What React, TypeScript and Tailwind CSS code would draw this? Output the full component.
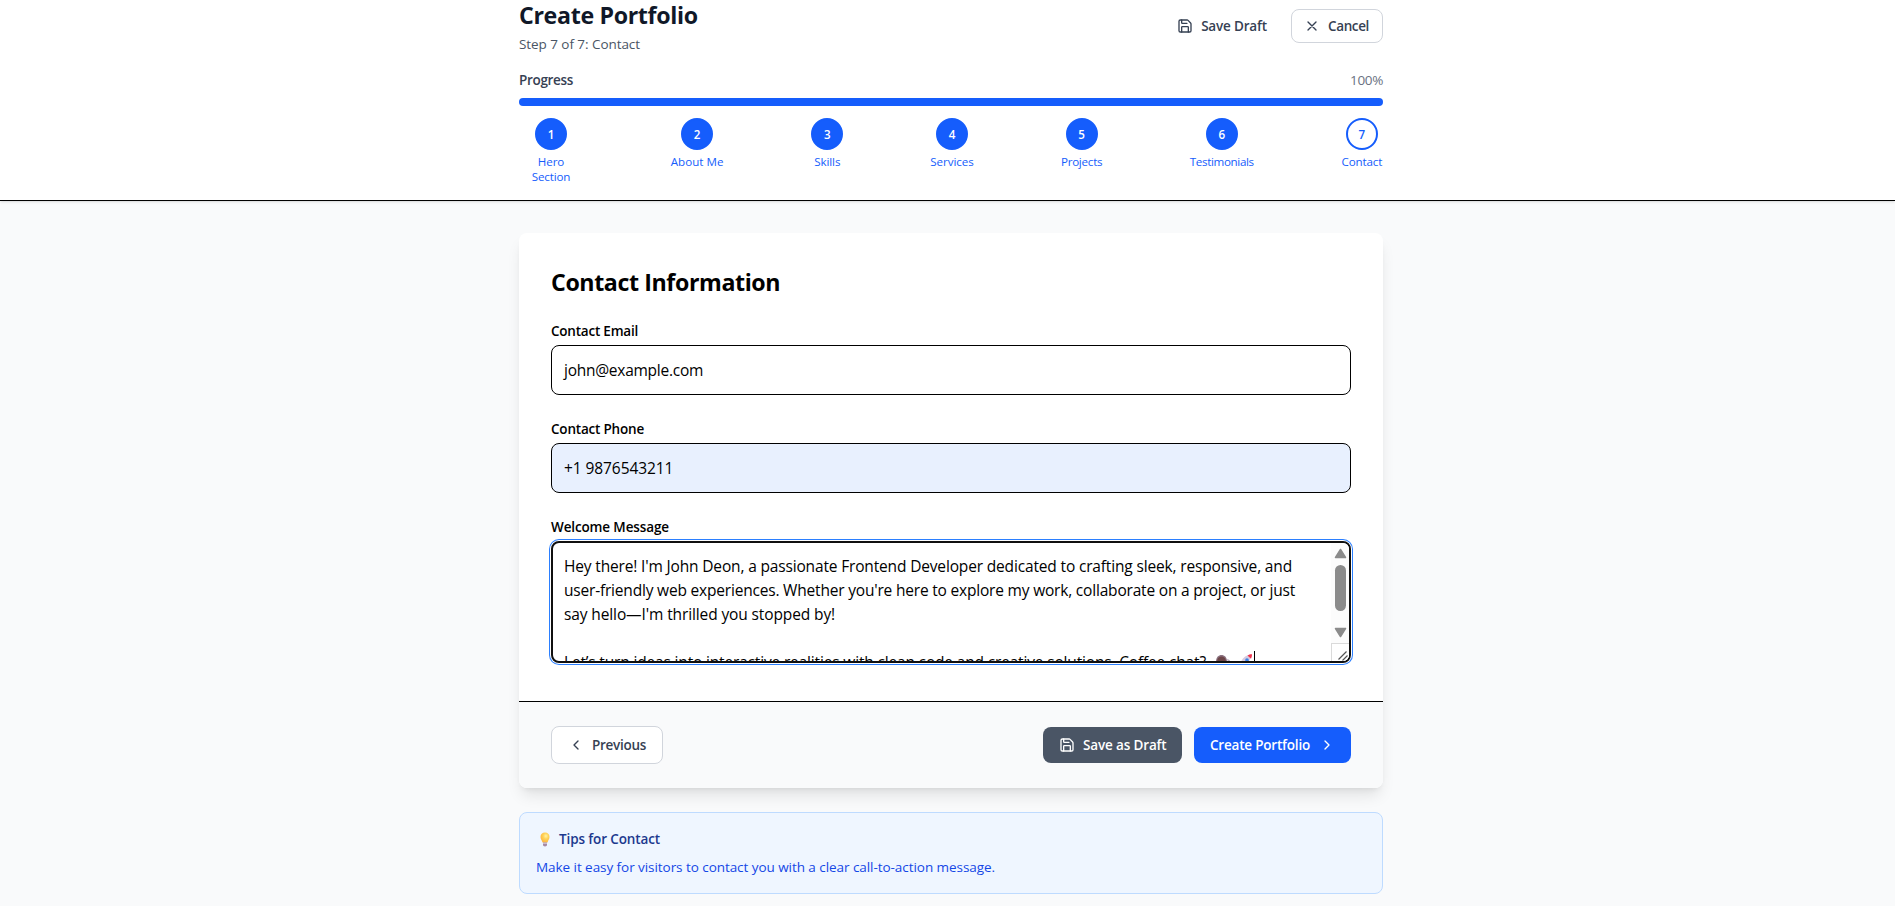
import type { ReactNode } from 'react';

type Step = { label: ReactNode; width: string; tracking: string };

const steps: Step[] = [
  { label: <>Hero<br />Section</>, width: 'w-16', tracking: 'tracking-[-0.13px]' },
  { label: 'About Me', width: 'w-[54px]', tracking: 'tracking-[0.05px]' },
  { label: 'Skills', width: 'w-8', tracking: 'tracking-[-0.13px]' },
  { label: 'Services', width: 'w-[43px]', tracking: 'tracking-[-0.06px]' },
  { label: 'Projects', width: 'w-[42px]', tracking: 'tracking-[-0.24px]' },
  { label: 'Testimonials', width: 'w-16', tracking: 'tracking-[-0.34px]' },
  { label: 'Contact', width: 'w-[42px]', tracking: 'tracking-[-0.14px]' },
];

function SaveIcon() {
  return (
    <svg className="size-4 shrink-0" viewBox="0 0 24 24" fill="none" stroke="currentColor" strokeWidth="2" strokeLinecap="round" strokeLinejoin="round">
      <path d="M15.2 3a2 2 0 0 1 1.4.6l3.8 3.8a2 2 0 0 1 .6 1.4V19a2 2 0 0 1-2 2H5a2 2 0 0 1-2-2V5a2 2 0 0 1 2-2z" />
      <path d="M17 21v-7a1 1 0 0 0-1-1H8a1 1 0 0 0-1 1v7" />
      <path d="M7 3v4a1 1 0 0 0 1 1h7" />
    </svg>
  );
}

function StrokeIcon({ d }: { d: string }) {
  return (
    <svg className="size-4 shrink-0" viewBox="0 0 24 24" fill="none" stroke="currentColor" strokeWidth="2" strokeLinecap="round" strokeLinejoin="round">
      <path d={d} />
    </svg>
  );
}

function BulbIcon() {
  return (
    <svg className="mr-[9px] ml-1 h-[15px] w-[10px] shrink-0" viewBox="0 0 10 15">
      <defs>
        <radialGradient id="bulb" cx="0.6" cy="0.35" r="0.65">
          <stop offset="0" stopColor="#fff3a6" />
          <stop offset="0.45" stopColor="#ffd358" />
          <stop offset="1" stopColor="#fdb640" />
        </radialGradient>
      </defs>
      <path d="M5 .6C2.3.6.5 2.5.5 4.9c0 2.4 1.5 3.3 2 5.6h5c.5-2.300 2-3.200 2-5.600C9.500 2.500 7.700.6 5 .6Z" fill="url(#bulb)" />
      <path d="M3 10.500h4v2.300c0 1-.8 1.700-2 1.700s-2-.7-2-1.700Z" fill="#a58aa5" />
      <path d="M3 11.200h4v.8H3Z" fill="#d5c7d8" />
    </svg>
  );
}

function MessageEmojis() {
  return (
    <svg className="ml-[9px] h-6 w-[39px] shrink-0" viewBox="0 0 39 24">
      <path d="M1 11.500C1 7.500 3.400 5 6.500 5s5.500 2.500 5.500 6.500v8H1Z" fill="#8b7280" />
      <ellipse cx="6.500" cy="10.500" rx="4.300" ry="4" fill="#6d4548" />
      <path d="M12 10c1.500-.3 2.800.6 2.800 2.500" fill="none" stroke="#b7a5bb" strokeWidth="1.200" />
      <path d="M25.500 13c1.500-4.500 5-8 10.500-8.500-.3 5.200-3 9.500-8 11.500Z" fill="#d6cbe0" />
      <path d="M32.500 5.500c1.200-.9 2.500-1.200 4.500-1.200 0 1.700-.3 3-1 4.400Z" fill="#f0364f" />
      <circle cx="32" cy="10" r="1.800" fill="#3b82e6" />
    </svg>
  );
}

function Scrollbar() {
  return (
    <div className="flex w-[18px] shrink-0 flex-col bg-[#fcfcfc]">
      <div className="flex h-[100px] flex-col items-center pt-[5px]">
        <svg className="h-[11px] w-[13px]" viewBox="0 0 13 11">
          <path d="M6.500 1.500 11.500 9.500H1.500Z" fill="#8b8b8b" stroke="#8b8b8b" strokeWidth="1.500" strokeLinejoin="round" />
        </svg>
        <div className="mt-[6px] h-[46px] w-[11px] rounded-full bg-[#8b8b8b]" />
        <svg className="mt-[16px] h-[11px] w-[13px]" viewBox="0 0 13 11">
          <path d="M6.500 9.500 11.500 1.500H1.500Z" fill="#8b8b8b" stroke="#8b8b8b" strokeWidth="1.500" strokeLinejoin="round" />
        </svg>
      </div>
      <div className="flex flex-1 items-end justify-end border-t border-l border-[#dadada] bg-white">
        <svg className="h-[12px] w-[11px]" viewBox="0 0 11 12" fill="none" stroke="#555" strokeWidth="1.200">
          <path d="M.5 10.500 8.500 2.500M4.500 11.500 9.500 6.500" />
        </svg>
      </div>
    </div>
  );
}

function Label({ children, className }: { children: ReactNode; className: string }) {
  return <label className={`mb-1 block text-[13.5px] leading-5 font-semibold text-black ${className}`}>{children}</label>;
}

export default function App() {
  return (
    <div className="h-[906px] overflow-hidden bg-gray-50 font-['Open_Sans','Segoe_UI',sans-serif]">
      <header className="h-[201px] border-b border-black bg-white pl-[7px] shadow-sm">
        <div className="mx-auto w-[896px] px-4">
          <div className="flex h-[54px] items-start justify-between">
            <div>
              <h1 className="text-[23.2px] leading-[30px] font-bold tracking-[-0.34px] text-gray-900">Create Portfolio</h1>
              <p className="mt-1 text-[13.5px] leading-5 tracking-[-0.06px] text-gray-600">Step 7 of 7: Contact</p>
            </div>
            <div className="mt-[9px] flex gap-3 text-[13.5px] leading-5 font-semibold text-gray-700">
              <button className="flex h-[34px] items-center gap-2 px-3 whitespace-nowrap">
                <SaveIcon />
                <span className="w-[66px] tracking-[-0.18px]">Save Draft</span>
              </button>
              <button className="flex h-[34px] w-[92px] items-center gap-2 rounded-lg border border-gray-300 bg-white px-3 whitespace-nowrap">
                <StrokeIcon d="M18 6 6 18M6 6l12 12" />
                <span className="tracking-[-0.37px]">Cancel</span>
              </button>
            </div>
          </div>

          <div className="mt-4 flex justify-between text-[13.5px] leading-5">
            <span className="font-semibold tracking-[-0.33px] text-gray-700">Progress</span>
            <span className="tracking-[-0.33px] text-gray-500">100%</span>
          </div>
          <div className="mt-2 h-2 rounded-full bg-[#155dfc]" />

          <div className="mt-3 flex justify-between">
            {steps.map((step, i) => (
              <div key={i} className={`flex flex-col items-center ${step.width}`}>
                <div
                  className={`flex size-8 items-center justify-center rounded-full border-2 border-[#155dfc] pt-px text-[11.6px] font-semibold ${
                    i === 6 ? 'bg-white text-[#155dfc]' : 'bg-[#155dfc] text-white'
                  }`}
                >
                  {i + 1}
                </div>
                <span className={`mt-1 text-center text-[11.6px] leading-[15px] whitespace-nowrap text-[#155dfc] ${step.tracking}`}>
                  {step.label}
                </span>
              </div>
            ))}
          </div>
        </div>
      </header>

      <main className="pl-[7px]">
        <div className="mx-auto w-[896px] px-4 pt-8">
          <section className="rounded-lg bg-white shadow-lg">
            <div className="h-[468px] px-8 pt-[33px]">
              <h2 className="mb-[23px] text-[23.2px] leading-8 font-bold tracking-[-0.4px] text-black">Contact Information</h2>

              <Label className="tracking-[-0.22px]">Contact Email</Label>
              <div className="mb-6 flex h-[50px] items-center rounded-lg border border-black px-3 pt-0.5 text-[15.5px] tracking-[-0.26px] text-black">
                john@example.com
              </div>

              <Label className="tracking-[-0.2px]">Contact Phone</Label>
              <div className="mb-6 flex h-[50px] items-center rounded-lg border border-black bg-[#e8f0fe] px-3 pt-0.5 text-[15.5px] tracking-[-0.08px] text-black">
                +1 9876543211
              </div>

              <Label className="tracking-[-0.13px]">Welcome Message</Label>
              <div className="flex h-[122px] overflow-hidden rounded-lg border-2 border-[#101010] bg-white shadow-[0_0_0_1px_#fff,0_0_0_2px_#2b7fff]">
                <div className="flex-1 pt-[11px] pl-[11px] text-[15.5px] leading-6 whitespace-nowrap text-black">
                  <p className="tracking-[-0.159px]">
                    Hey there! I'm John Deon, a passionate Frontend Developer dedicated to crafting sleek, responsive, and
                  </p>
                  <p className="tracking-[-0.192px]">
                    user-friendly web experiences. Whether you're here to explore my work, collaborate on a project, or just
                  </p>
                  <p className="mb-6 tracking-[-0.115px]">say hello—I'm thrilled you stopped by!</p>
                  <div className="flex">
                    <span className="tracking-[-0.167px]">
                      Let’s turn ideas into interactive realities with clean code and creative solutions. Coffee chat?
                    </span>
                    <MessageEmojis />
                    <span className="mt-[1px] h-5 w-px bg-black" />
                  </div>
                </div>
                <Scrollbar />
              </div>
            </div>

            <div className="flex h-[87px] items-center justify-between rounded-b-lg border-t border-black bg-gray-50 px-8 text-[13.5px] leading-5 font-semibold whitespace-nowrap">
              <button className="flex h-[38px] w-[112px] items-center gap-2 rounded-lg border border-gray-300 bg-white px-4 text-gray-700">
                <StrokeIcon d="m15 18-6-6 6-6" />
                <span className="tracking-[-0.29px]">Previous</span>
              </button>
              <div className="flex gap-3 text-white">
                <button className="flex h-9 w-[139px] items-center gap-2 rounded-lg bg-gray-600 px-4">
                  <SaveIcon />
                  <span className="tracking-[-0.15px]">Save as Draft</span>
                </button>
                <button className="flex h-9 w-[157px] items-center justify-between rounded-lg bg-[#155dfc] px-4">
                  <span className="tracking-[-0.2px]">Create Portfolio</span>
                  <StrokeIcon d="m9 18 6-6-6-6" />
                </button>
              </div>
            </div>
          </section>

          <aside className="mt-6 h-[82px] rounded-lg border border-blue-200 bg-blue-50 p-4 text-[13.5px] leading-5">
            <h3 className="mb-2 flex items-center font-semibold tracking-[-0.12px] text-blue-900">
              <BulbIcon />
              Tips for Contact
            </h3>
            <p className="tracking-[-0.056px] text-blue-700">
              Make it easy for visitors to contact you with a clear call-to-action message.
            </p>
          </aside>
        </div>
      </main>
    </div>
  );
}
